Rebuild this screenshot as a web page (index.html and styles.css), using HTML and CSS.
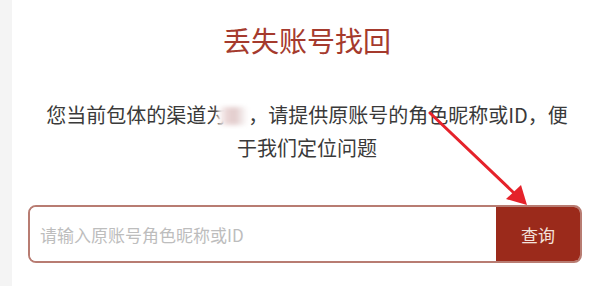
FILE: index.html
```html
<!DOCTYPE html>
<html lang="zh-CN">
<head>
<meta charset="utf-8">
<title>丢失账号找回</title>
<link rel="stylesheet" href="styles.css">
</head>
<body>
<div class="page">
  <div class="side"></div>
  <main class="main">
    <h1 class="title">丢失账号找回</h1>
    <p class="desc">您当前包体的渠道为<span class="blur"></span>，请提供原账号的角色昵称或ID，便于我们定位问题</p>
    <div class="search">
      <input class="field" type="text" placeholder="请输入原账号角色昵称或ID">
      <button class="btn" type="button">查询</button>
    </div>
  </main>
  <svg class="arrow" width="597" height="286" viewBox="0 0 597 286">
    <line x1="430" y1="113" x2="514" y2="193" stroke="#e5222a" stroke-width="3" stroke-linecap="round"/>
    <polygon points="527,205 506,199 521,185" fill="#e5222a"/>
  </svg>
</div>
</body>
</html>
```
FILE: styles.css
```css
html, body {
  margin: 0;
  padding: 0;
  background: #ffffff;
}
body {
  font-family: "Noto Sans CJK SC", "Noto Sans", sans-serif;
  width: 597px;
  height: 286px;
  overflow: hidden;
}
.page {
  position: relative;
  display: flex;
  width: 597px;
  height: 286px;
}
.side {
  width: 12px;
  background: #f4f4f4;
  flex-shrink: 0;
}
.main {
  flex: 1;
  padding: 0 15px 0 16px;
  display: flex;
  flex-direction: column;
  align-items: stretch;
}
.title {
  margin: 20px 0 0 0;
  font-size: 28px;
  line-height: 40px;
  font-weight: 400;
  color: #a53a2d;
  text-align: center;
  padding-left: 4px;
}
.desc {
  margin: 38px 10px 0 14px;
  font-size: 20px;
  line-height: 33px;
  color: #3a3a3a;
  text-align: center;
}
.blur {
  display: inline-block;
  width: 30px;
  height: 18px;
  vertical-align: -2px;
  margin-left: -8px;
  background: linear-gradient(90deg, #ffffff 0%, #ead6d6 30%, #e2cccc 55%, #f1e8e8 80%, #ffffff 100%);
  filter: blur(2px);
}
.search {
  display: flex;
  margin-top: 41px;
  height: 58px;
  border: 2px solid #b87c72;
  border-radius: 8px;
  overflow: hidden;
  box-sizing: border-box;
}
.field {
  flex: 1;
  border: none;
  outline: none;
  padding: 0 10px;
  font-family: "Noto Sans CJK SC", "Noto Sans", sans-serif;
  font-size: 17px;
  color: #333;
  background: #fff;
  min-width: 0;
}
.field::placeholder {
  color: #bdbdbd;
}
.btn {
  width: 84px;
  border: none;
  background: #9b2a1b;
  color: #f3e2dc;
  font-family: "Noto Sans CJK SC", "Noto Sans", sans-serif;
  font-size: 17px;
  padding: 0;
}
.arrow {
  position: absolute;
  left: 0;
  top: 0;
  pointer-events: none;
}
```
